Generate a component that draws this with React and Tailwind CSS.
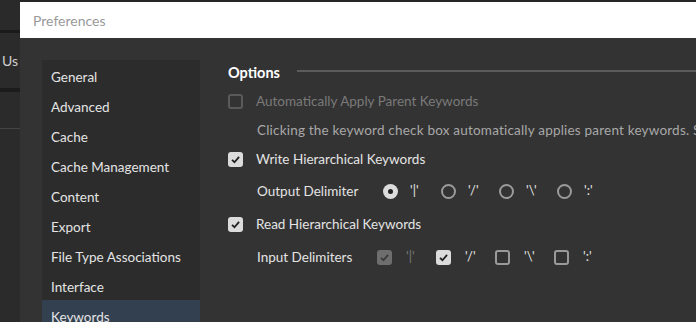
import React from 'react';

const font = { fontFamily: 'Lato, "Open Sans", sans-serif' };

function Check({ checked, disabled }) {
  if (checked) {
    return (
      <span
        className={`w-[15px] h-[15px] rounded-[3px] flex items-center justify-center shrink-0 ${
          disabled ? 'bg-[#6e6e6e]' : 'bg-[#dcdcdc]'
        }`}
      >
        <svg width="11" height="11" viewBox="0 0 12 12">
          <path d="M2.2 6.3 L4.9 9 L9.9 3.2" fill="none" stroke={disabled ? '#3a3a3a' : '#222'} strokeWidth="2" />
        </svg>
      </span>
    );
  }
  return (
    <span
      className={`w-[15px] h-[15px] rounded-[3px] border-2 shrink-0 ${
        disabled ? 'border-[#5a5a5a]' : 'border-[#9a9a9a]'
      }`}
    />
  );
}

function Radio({ selected }) {
  if (selected) {
    return (
      <span className="w-[15px] h-[15px] rounded-full bg-[#dcdcdc] flex items-center justify-center shrink-0">
        <span className="w-[5px] h-[5px] rounded-full bg-[#222]" />
      </span>
    );
  }
  return <span className="w-[15px] h-[15px] rounded-full border-2 border-[#9a9a9a] shrink-0" />;
}

const navItems = [
  'General',
  'Advanced',
  'Cache',
  'Cache Management',
  'Content',
  'Export',
  'File Type Associations',
  'Interface',
  'Keywords',
];

export default function App() {
  return (
    <div className="relative w-[696px] h-[322px] overflow-hidden bg-[#262626]" style={font}>
      {/* app behind the dialog */}
      <div className="flex flex-col w-[20px] h-full">
        <div className="h-[30px] shrink-0 bg-[#2a2a2a]" />
        <div className="h-[3px] shrink-0 bg-[#1a1a1a]" />
        <div className="h-[55px] shrink-0 bg-[#2b2b2b] flex items-center pl-[2px] text-[14px] text-[#d0d0d0] whitespace-nowrap">
          Us
        </div>
        <div className="h-[4px] shrink-0 bg-[#1c1c1c]" />
        <div className="h-[36px] shrink-0 bg-[#2b2b2b]" />
        <div className="h-[1px] shrink-0 bg-[#444]" />
        <div className="flex-1 bg-[#2b2b2b]" />
      </div>

      {/* dialog */}
      <div className="absolute left-[20px] top-[2px] right-0 bottom-0 flex flex-col bg-[#333333] overflow-hidden">
        <div className="h-[36px] shrink-0 bg-white flex items-center pl-[13px] text-[14px] text-[#9a9a9a]">
          Preferences
        </div>
        <div className="flex-1 flex pl-[22px] pt-[22px]">
          <div className="w-[158px] shrink-0 bg-[#2c2c2c] pt-[2px] flex flex-col">
            {navItems.map((item) => (
              <div
                key={item}
                className={`shrink-0 flex items-center pl-[9px] text-[13.5px] text-[#e4e4e4] ${
                  item === 'Keywords' ? 'bg-[#334050] mt-[-2px] pt-[2px] h-[32px]' : 'h-[30px]'
                }`}
              >
                {item}
              </div>
            ))}
          </div>

          <div className="flex-1 min-w-0 pl-[28px] flex flex-col text-[13.5px] whitespace-nowrap overflow-hidden">
            <div className="h-[26px] shrink-0 flex items-center">
              <span className="text-[14.5px] font-bold text-white">Options</span>
              <div className="flex-1 h-[2px] bg-[#5c5c5c] ml-[17px] mt-[-4px]" />
            </div>
            <div className="h-[30px] shrink-0 flex items-center gap-[13px] text-[#7a7a7a]">
              <Check disabled />
              <span>Automatically Apply Parent Keywords</span>
            </div>
            <div className="h-[28px] shrink-0 flex items-center pl-[29px] text-[#a8a8a8] tracking-[0.2px]">
              Clicking the keyword check box automatically applies parent keywords. S
            </div>
            <div className="h-[30px] shrink-0 flex items-center gap-[13px] text-[#e4e4e4]">
              <Check checked />
              <span>Write Hierarchical Keywords</span>
            </div>
            <div className="h-[34px] shrink-0 flex items-center pl-[29px] text-[#e4e4e4]">
              <span className="w-[126px]">Output Delimiter</span>
              <div className="flex items-center">
                {["'|'", "'/'", "'\\'", "':'"].map((d, i) => (
                  <div key={i} className="w-[58px] flex items-center gap-[12px]">
                    <Radio selected={i === 0} />
                    <span className="text-[13px]">{d}</span>
                  </div>
                ))}
              </div>
            </div>
            <div className="h-[32px] shrink-0 flex items-center gap-[13px] text-[#e4e4e4]">
              <Check checked />
              <span>Read Hierarchical Keywords</span>
            </div>
            <div className="h-[34px] shrink-0 flex items-center pl-[29px] text-[#e4e4e4]">
              <span className="w-[120px]">Input Delimiters</span>
              <div className="flex items-center">
                {["'|'", "'/'", "'\\'", "':'"].map((d, i) => (
                  <div key={i} className="w-[59px] flex items-center gap-[14px]">
                    <Check checked={i < 2} disabled={i === 0} />
                    <span className={`text-[13px] ${i === 0 ? 'text-[#7a7a7a]' : ''}`}>{d}</span>
                  </div>
                ))}
              </div>
            </div>
          </div>
        </div>
      </div>
    </div>
  );
}
